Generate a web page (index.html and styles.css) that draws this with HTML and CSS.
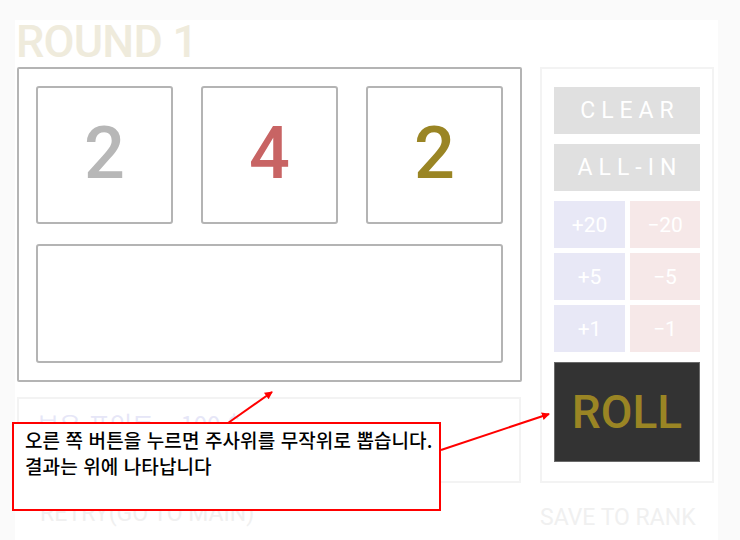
FILE: index.html
```html
<!DOCTYPE html>
<html lang="ko">
<head>
<meta charset="utf-8">
<title>Dice</title>
<link rel="stylesheet" href="styles.css">
</head>
<body>
<div class="app">
  <h1 class="title">ROUND 1</h1>
  <div class="main">
    <div class="left">
      <div class="game">
        <div class="dice-row">
          <div class="die die-grey">2</div>
          <div class="die die-red">4</div>
          <div class="die die-olive">2</div>
        </div>
        <div class="result"></div>
      </div>
      <div class="info">
        <div class="own">보유 포인트 – 100 $</div>
        <div class="bet">베팅 포인트 – 0 $</div>
      </div>
      <div class="link retry">RETRY(GO TO MAIN)</div>
    </div>
    <div class="right">
      <div class="panel">
        <div class="btn wide">CLEAR</div>
        <div class="btn wide">ALL-IN</div>
        <div class="grid">
          <div class="btn plus">+20</div>
          <div class="btn minus">−20</div>
          <div class="btn plus">+5</div>
          <div class="btn minus">−5</div>
          <div class="btn plus">+1</div>
          <div class="btn minus">−1</div>
        </div>
        <div class="roll">ROLL</div>
      </div>
      <div class="link save">SAVE TO RANK</div>
    </div>
  </div>
</div>

<div class="callout">오른 쪽 버튼을 누르면 주사위를 무작위로 뽑습니다.<br>결과는 위에 나타납니다</div>
<svg class="arrows" width="740" height="540" viewBox="0 0 740 540">
  <defs>
    <marker id="ah" markerWidth="8" markerHeight="8" refX="7" refY="4" orient="auto" markerUnits="userSpaceOnUse">
      <path d="M0,0 L8,4 L0,8 Z" fill="#ff0000"/>
    </marker>
  </defs>
  <line x1="228" y1="423" x2="272" y2="392" stroke="#ff0000" stroke-width="2" marker-end="url(#ah)"/>
  <line x1="441" y1="450" x2="549" y2="414" stroke="#ff0000" stroke-width="2" marker-end="url(#ah)"/>
</svg>
</body>
</html>
```
FILE: styles.css
```css
* { box-sizing: border-box; }
html, body { margin: 0; padding: 0; }
body {
  background: #fafafa;
  width: 740px;
  height: 540px;
  overflow: hidden;
  position: relative;
  font-family: Roboto, "Noto Sans CJK KR", sans-serif;
}
.app {
  margin: 20px 0 0 15px;
  width: 703px;
  height: 520px;
  background: #ffffff;
}
.title {
  margin: 0;
  padding-left: 1px;
  height: 47px;
  font-size: 45px;
  line-height: 44px;
  font-weight: 500;
  color: #efebdc;
  letter-spacing: -0.8px;
}
.main {
  display: flex;
  padding-left: 2px;
}
.left { width: 505px; }
.game {
  border: 2px solid #b4b4b4;
  border-radius: 2px;
  padding: 17px;
  height: 315px;
}
.dice-row {
  display: flex;
  gap: 28px;
}
.die {
  width: 137px;
  height: 138px;
  border: 2px solid #b4b4b4;
  border-radius: 3px;
  display: flex;
  align-items: center;
  justify-content: center;
  font-size: 72px;
  font-weight: 500;
  padding-bottom: 4px;
}
.die-grey { color: #b7b7b7; }
.die-red { color: #c86464; }
.die-olive { color: #9a8524; }
.result {
  margin-top: 20px;
  height: 119px;
  border: 2px solid #b4b4b4;
  border-radius: 3px;
}
.info {
  margin-top: 15px;
  height: 86px;
  width: 504px;
  border: 2px solid #f3f3f3;
  padding: 6px 0 0 18px;
  font-family: "Noto Sans CJK KR", sans-serif;
  font-size: 24px;
  line-height: 38px;
}
.own { color: #e6e6f7; }
.bet { color: #f7e3e3; }
.link {
  font-size: 23px;
  color: #f0f0f0;
  line-height: 30px;
}
.retry { margin: 16px 0 0 23px; }
.right {
  margin-left: 18px;
  width: 174px;
}
.panel {
  border: 2px solid #f3f3f3;
  height: 416px;
  padding: 18px 12px 0 12px;
}
.btn {
  display: flex;
  align-items: center;
  justify-content: center;
  color: #ffffff;
  height: 47px;
}
.wide {
  background: #e0e0e0;
  font-size: 23px;
  letter-spacing: 6px;
  padding-left: 6px;
  margin-bottom: 10px;
}
.grid {
  display: grid;
  grid-template-columns: 71px 70px;
  column-gap: 5px;
  row-gap: 5px;
}
.plus { background: #e8e8f6; font-size: 21px; }
.minus { background: #f6e8e8; font-size: 21px; }
.roll {
  margin-top: 10px;
  height: 100px;
  background: #333333;
  border: 1px solid #6a6a6a;
  color: #9a8524;
  font-size: 46px;
  font-weight: 500;
  display: flex;
  align-items: center;
  justify-content: center;
}
.save { margin: 20px 0 0 0; }
.callout {
  position: absolute;
  left: 12px;
  top: 422px;
  width: 429px;
  height: 89px;
  border: 2px solid #ff0000;
  background: #ffffff;
  padding: 3px 0 0 11px;
  font-family: "Noto Sans CJK KR", sans-serif;
  font-size: 19px;
  font-weight: 500;
  line-height: 26px;
  color: #000000;
  letter-spacing: 0.1px;
}
.arrows {
  position: absolute;
  left: 0;
  top: 0;
  pointer-events: none;
}
```
